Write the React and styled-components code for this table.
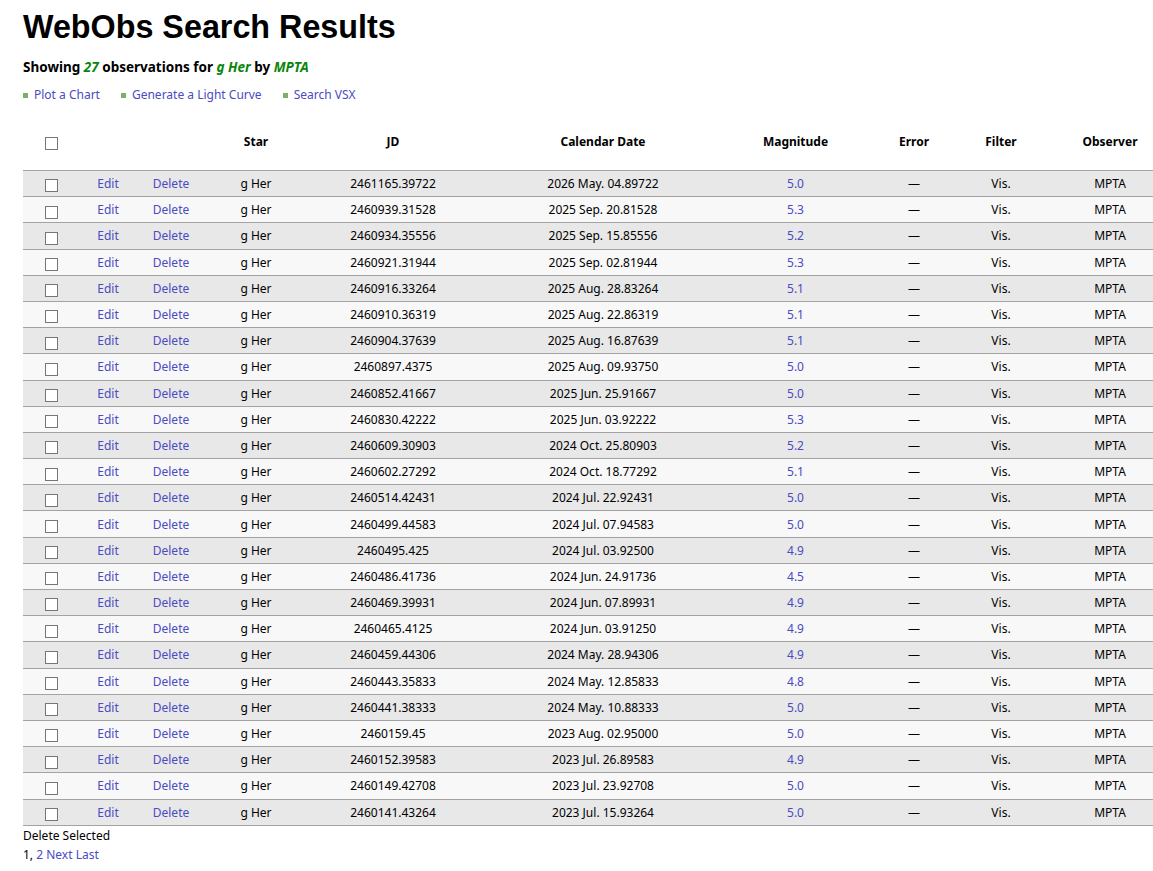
import React from "react";
import styled, { createGlobalStyle } from "styled-components";

const Global = createGlobalStyle`
  html, body { margin: 0; padding: 0; background: #fff; }
  body { font-family: "Noto Sans", "Open Sans", sans-serif; color: #000; }
`;

const Page = styled.div`
  padding: 8px 0 0 23px;
`;

const Title = styled.h1`
  margin: 0;
  font-family: "Liberation Sans", Arial, sans-serif;
  font-size: 32.3px;
  line-height: 38px;
  font-weight: bold;
`;

const Summary = styled.p`
  margin: 12px 0 0;
  font-size: 13.5px;
  line-height: 18px;
  font-weight: bold;
`;

const Hi = styled.em`
  color: #0a850a;
  font-style: italic;
`;

const LinkBar = styled.ul`
  list-style: none;
  margin: 10px 0 0;
  padding: 0;
  display: flex;
  gap: 21px;
  font-size: 12px;
  line-height: 18px;
`;

const LinkItem = styled.li`
  display: flex;
  align-items: center;
  gap: 6px;
  &::before {
    content: "";
    width: 5px;
    height: 5px;
    background: #7cb065;
    margin-top: 1px;
  }
`;

const A = styled.a`
  color: #4b4bc3;
  text-decoration: none;
`;

const Table = styled.table`
  margin-top: 15px;
  width: 1130px;
  table-layout: fixed;
  border-collapse: collapse;
  font-size: 12px;
`;

const Th = styled.th`
  height: 45px;
  padding: 0 0 6px ${(p) => p.$shift || 0}px;
  text-align: center;
  vertical-align: middle;
  font-weight: bold;
  border-bottom: 1px solid #a3a3a3;
`;

const Tr = styled.tr`
  background: ${(p) => (p.$odd ? "#e8e8e8" : "#f8f8f8")};
`;

const Td = styled.td`
  height: 25.2px;
  padding: 0 0 0 ${(p) => p.$shift || 0}px;
  text-align: center;
  vertical-align: middle;
  border-bottom: 1px solid #a3a3a3;
  white-space: nowrap;
`;

const Box = styled.input.attrs({ type: "checkbox" })`
  appearance: none;
  -webkit-appearance: none;
  width: 13px;
  height: 13px;
  margin: 3px 0 0;
  border: 1px solid #767676;
  background: #fff;
  box-sizing: border-box;
  vertical-align: middle;
  display: inline-block;
`;

const Footer = styled.div`
  font-size: 12px;
  line-height: 19px;
  color: #000;
`;

const cols = [57, 56, 70, 100, 174, 246, 139, 98, 76, 114];

const rows = [
  ["2461165.39722", "2026 May. 04.89722", "5.0"],
  ["2460939.31528", "2025 Sep. 20.81528", "5.3"],
  ["2460934.35556", "2025 Sep. 15.85556", "5.2"],
  ["2460921.31944", "2025 Sep. 02.81944", "5.3"],
  ["2460916.33264", "2025 Aug. 28.83264", "5.1"],
  ["2460910.36319", "2025 Aug. 22.86319", "5.1"],
  ["2460904.37639", "2025 Aug. 16.87639", "5.1"],
  ["2460897.4375", "2025 Aug. 09.93750", "5.0"],
  ["2460852.41667", "2025 Jun. 25.91667", "5.0"],
  ["2460830.42222", "2025 Jun. 03.92222", "5.3"],
  ["2460609.30903", "2024 Oct. 25.80903", "5.2"],
  ["2460602.27292", "2024 Oct. 18.77292", "5.1"],
  ["2460514.42431", "2024 Jul. 22.92431", "5.0"],
  ["2460499.44583", "2024 Jul. 07.94583", "5.0"],
  ["2460495.425", "2024 Jul. 03.92500", "4.9"],
  ["2460486.41736", "2024 Jun. 24.91736", "4.5"],
  ["2460469.39931", "2024 Jun. 07.89931", "4.9"],
  ["2460465.4125", "2024 Jun. 03.91250", "4.9"],
  ["2460459.44306", "2024 May. 28.94306", "4.9"],
  ["2460443.35833", "2024 May. 12.85833", "4.8"],
  ["2460441.38333", "2024 May. 10.88333", "5.0"],
  ["2460159.45", "2023 Aug. 02.95000", "5.0"],
  ["2460152.39583", "2023 Jul. 26.89583", "4.9"],
  ["2460149.42708", "2023 Jul. 23.92708", "5.0"],
  ["2460141.43264", "2023 Jul. 15.93264", "5.0"],
];

export default function App() {
  return (
    <Page>
      <Global />
      <Title>WebObs Search Results</Title>
      <Summary>
        Showing <Hi>27</Hi> observations for <Hi>g Her</Hi> by <Hi>MPTA</Hi>
      </Summary>
      <LinkBar>
        <LinkItem><A href="#">Plot a Chart</A></LinkItem>
        <LinkItem><A href="#">Generate a Light Curve</A></LinkItem>
        <LinkItem><A href="#">Search VSX</A></LinkItem>
      </LinkBar>
      <Table>
        <colgroup>
          {cols.map((w, i) => (
            <col key={i} style={{ width: w }} />
          ))}
        </colgroup>
        <thead>
          <tr>
            <Th><Box /></Th>
            <Th />
            <Th />
            <Th>Star</Th>
            <Th>JD</Th>
            <Th>Calendar Date</Th>
            <Th>Magnitude</Th>
            <Th>Error</Th>
            <Th>Filter</Th>
            <Th $shift={28}>Observer</Th>
          </tr>
        </thead>
        <tbody>
          {rows.map(([jd, date, mag], i) => (
            <Tr key={i} $odd={i % 2 === 0}>
              <Td><Box /></Td>
              <Td><A href="#">Edit</A></Td>
              <Td><A href="#">Delete</A></Td>
              <Td>g Her</Td>
              <Td>{jd}</Td>
              <Td>{date}</Td>
              <Td><A href="#">{mag}</A></Td>
              <Td>—</Td>
              <Td>Vis.</Td>
              <Td $shift={28}>MPTA</Td>
            </Tr>
          ))}
        </tbody>
      </Table>
      <Footer>
        <div>Delete Selected</div>
        <div>
          1, <A href="#">2</A> <A href="#">Next</A> <A href="#">Last</A>
        </div>
      </Footer>
    </Page>
  );
}
